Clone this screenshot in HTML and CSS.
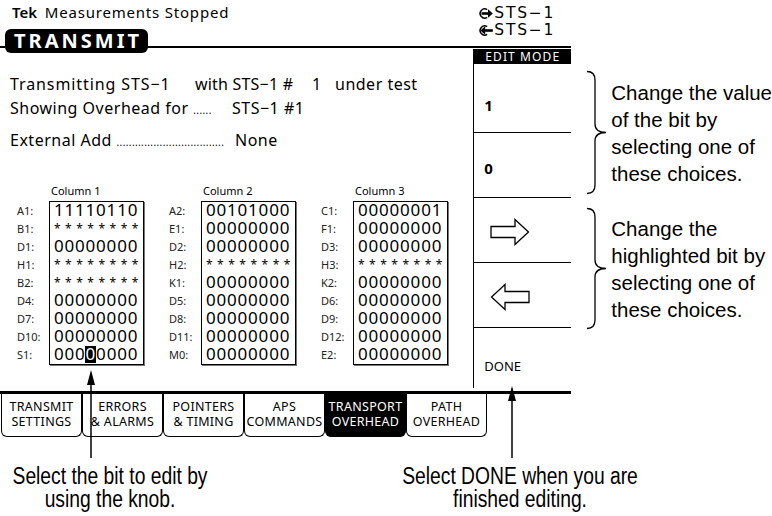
FILE: index.html
```html
<!DOCTYPE html>
<html>
  <head>
    <title>Transmit - Transport Overhead Edit</title>
    <link rel="stylesheet" href="styles.css">
  </head>
  <body>
    <div class="page">
      <div class="upper">
        <div class="screen">
          <div class="screen-head">
            <div class="status"><span class="tek">Tek</span> Measurements Stopped</div>
            <div class="sts">
              <div class="sts-line">
                <svg class="sts-icon" width="14" height="13" viewBox="0 0 14 13">
                  <path d="M8.2 2.6 A4.6 4.6 0 1 0 8.2 10.4" fill="none" stroke="#000" stroke-width="1.5"/>
                  <rect x="2.5" y="5.2" width="7" height="2.6" fill="#000"/>
                  <polygon points="9,2.2 13.8,6.5 9,10.8" fill="#000"/>
                </svg>
                <span>STS−1</span>
              </div>
              <div class="sts-line">
                <svg class="sts-icon" width="14" height="13" viewBox="0 0 14 13">
                  <path d="M8.2 2.6 A4.6 4.6 0 1 0 8.2 10.4" fill="none" stroke="#000" stroke-width="1.5"/>
                  <rect x="5" y="5.2" width="8.8" height="2.6" fill="#000"/>
                  <polygon points="6.2,2.2 1.4,6.5 6.2,10.8" fill="#000"/>
                </svg>
                <span>STS−1</span>
              </div>
            </div>
            <div class="title-row">
              <div class="stub"></div>
              <div class="title">TRANSMIT</div>
              <div class="rule"></div>
            </div>
          </div>

          <div class="screen-body">
            <div class="main">
              <div class="info-line">
                <span class="tx-a">Transmitting STS−1</span><span class="tx-b">with STS−1 #</span><span class="tx-c">1</span>under test
              </div>
              <div class="info-line info-pair">
                <span>Showing Overhead for <span class="dots">......</span></span>
                <span>STS−1 #1</span>
              </div>
              <div class="info-line info-pair info-last">
                <span>External Add <span class="dots">...................................</span></span>
                <span>None</span>
              </div>

              <div class="overhead">
                <div class="col">
                  <div class="col-head">Column 1</div>
                  <div class="labels">
                    <div>A1:</div><div>B1:</div><div>D1:</div><div>H1:</div><div>B2:</div>
                    <div>D4:</div><div>D7:</div><div>D10:</div><div>S1:</div>
                  </div>
                  <div class="box">
                    <div class="val">11110110</div>
                    <div class="val stars">********</div>
                    <div class="val">00000000</div>
                    <div class="val stars">********</div>
                    <div class="val stars">********</div>
                    <div class="val">00000000</div>
                    <div class="val">00000000</div>
                    <div class="val">00000000</div>
                    <div class="val">000<span class="hl">0</span>0000</div>
                  </div>
                </div>

                <div class="col">
                  <div class="col-head">Column 2</div>
                  <div class="labels">
                    <div>A2:</div><div>E1:</div><div>D2:</div><div>H2:</div><div>K1:</div>
                    <div>D5:</div><div>D8:</div><div>D11:</div><div>M0:</div>
                  </div>
                  <div class="box">
                    <div class="val">00101000</div>
                    <div class="val">00000000</div>
                    <div class="val">00000000</div>
                    <div class="val stars">********</div>
                    <div class="val">00000000</div>
                    <div class="val">00000000</div>
                    <div class="val">00000000</div>
                    <div class="val">00000000</div>
                    <div class="val">00000000</div>
                  </div>
                </div>

                <div class="col">
                  <div class="col-head">Column 3</div>
                  <div class="labels">
                    <div>C1:</div><div>F1:</div><div>D3:</div><div>H3:</div><div>K2:</div>
                    <div>D6:</div><div>D9:</div><div>D12:</div><div>E2:</div>
                  </div>
                  <div class="box">
                    <div class="val">00000001</div>
                    <div class="val">00000000</div>
                    <div class="val">00000000</div>
                    <div class="val stars">********</div>
                    <div class="val">00000000</div>
                    <div class="val">00000000</div>
                    <div class="val">00000000</div>
                    <div class="val">00000000</div>
                    <div class="val">00000000</div>
                  </div>
                </div>
              </div>
            </div>

            <div class="menu">
              <div class="mode">EDIT MODE</div>
              <div class="items">
                <div class="item item-first bit">1</div>
                <div class="item item-val bit">0</div>
                <div class="item item-arrow">
                  <svg width="40" height="28" viewBox="0 0 40 28">
                    <path d="M1 8.5 H25 V1.5 L38.5 14 L25 26.5 V19.5 H1 Z" fill="#fff" stroke="#000" stroke-width="1.3"/>
                  </svg>
                </div>
                <div class="item item-arrow">
                  <svg width="40" height="28" viewBox="0 0 40 28">
                    <path d="M39 8.5 H15 V1.5 L1.5 14 L15 26.5 V19.5 H39 Z" fill="#fff" stroke="#000" stroke-width="1.3"/>
                  </svg>
                </div>
                <div class="item item-done">DONE</div>
              </div>
            </div>
          </div>

          <div class="screen-foot">
            <div class="tab">TRANSMIT<br>SETTINGS</div>
            <div class="tab">ERRORS<br>&amp; ALARMS</div>
            <div class="tab">POINTERS<br>&amp; TIMING</div>
            <div class="tab">APS<br>COMMANDS</div>
            <div class="tab tab-active">TRANSPORT<br>OVERHEAD</div>
            <div class="tab">PATH<br>OVERHEAD</div>
          </div>
        </div>

        <div class="notes">
          <div class="note">
            <svg class="brace" width="24" height="125" viewBox="0 0 24 125">
              <path d="M2 1.5 Q10 1.5 10 10 V54 Q10 62.5 21 62.5 Q10 62.5 10 71 V115 Q10 123.5 2 123.5" fill="none" stroke="#000" stroke-width="1.3"/>
            </svg>
            <div class="note-text">Change the value<br>of the bit by<br>selecting one of<br>these choices.</div>
          </div>
          <div class="note note-second">
            <svg class="brace" width="24" height="123" viewBox="0 0 24 123">
              <path d="M2 1.5 Q10 1.5 10 10 V53 Q10 61.5 21 61.5 Q10 61.5 10 70 V113 Q10 121.5 2 121.5" fill="none" stroke="#000" stroke-width="1.3"/>
            </svg>
            <div class="note-text">Change the<br>highlighted bit by<br>selecting one of<br>these choices.</div>
          </div>
        </div>
      </div>

      <div class="captions">
        <div class="cap cap-left">
          <span>Select the bit to edit by</span>
          <span>using the knob.</span>
        </div>
        <div class="cap cap-right">
          <span>Select DONE when you are</span>
          <span>finished editing.</span>
        </div>
      </div>

      <!-- callout arrows drawn over the screen -->
      <svg class="callout callout-bit" width="10" height="88" viewBox="0 0 10 88">
        <line x1="5" y1="10" x2="5" y2="88" stroke="#000" stroke-width="1.5"/>
        <polygon points="5,0 1,15 9,15" fill="#000"/>
      </svg>
      <svg class="callout callout-done" width="10" height="72" viewBox="0 0 10 72">
        <line x1="5" y1="10" x2="5" y2="72" stroke="#000" stroke-width="1.5"/>
        <polygon points="5,0 1,15 9,15" fill="#000"/>
      </svg>
    </div>
  </body>
</html>
```

FILE: styles.css
```css
body {
  margin: 0;
  font-family: "Noto Sans", sans-serif;
  color: #000;
  background-color: #fff;
}

.page {
  position: relative;
  width: 772px;
  height: 516px;
  overflow: hidden;
}

.upper {
  display: flex;
}

.screen {
  width: 574px;
}

/* header: status, sts lines, TRANSMIT title */
.screen-head {
  display: grid;
  grid-template-columns: 1fr auto;
  grid-template-rows: 29px 19px;
}

.status {
  grid-row: 1;
  grid-column: 1;
  padding: 3px 0 0 12px;
  font-size: 15px;
  line-height: 18px;
  letter-spacing: 0.8px;
}

.tek {
  font-weight: 600;
  letter-spacing: 0;
  margin-right: 3px;
}

.sts {
  grid-row: 1 / 3;
  grid-column: 2;
  padding: 5px 16px 0 0;
  font-family: "DejaVu Sans", sans-serif;
  font-size: 15.5px;
  line-height: 17px;
  letter-spacing: 1.8px;
}

.sts-line {
  display: flex;
  align-items: center;
  gap: 1px;
}

.title-row {
  grid-row: 2;
  grid-column: 1 / 3;
  display: flex;
  align-items: flex-end;
}

.stub {
  width: 5px;
  border-bottom: 2px solid #000;
}

.rule {
  flex: 1;
  border-bottom: 2px solid #000;
}

.title {
  width: 143px;
  height: 24px;
  margin-bottom: -5px;
  background-color: #000;
  color: #fff;
  border-radius: 6px;
  font-size: 20px;
  font-weight: bold;
  line-height: 24px;
  letter-spacing: 3px;
  text-indent: 3px;
  text-align: center;
}

/* body */
.screen-body {
  display: flex;
  height: 343px;
}

.main {
  flex: 1;
  padding: 24px 0 0 10px;
}

.info-line {
  font-size: 16px;
  line-height: 24px;
  letter-spacing: 0.5px;
  white-space: nowrap;
}

.tx-a {
  display: inline-block;
  width: 185px;
  letter-spacing: 0.9px;
}

.tx-b {
  display: inline-block;
  width: 117px;
  letter-spacing: 0.2px;
}

.tx-c {
  display: inline-block;
  width: 23px;
}

.info-pair {
  display: grid;
  grid-template-columns: 222px auto;
}

.info-last {
  margin-top: 6px;
  grid-template-columns: 225px auto;
}

.dots {
  font-size: 10px;
  letter-spacing: 0.4px;
}

.overhead {
  display: flex;
  gap: 25px;
  margin-top: 30px;
  padding-left: 7px;
}

.col {
  display: grid;
  grid-template-columns: 32px 95px;
}

.col-head {
  grid-column: 2;
  height: 17px;
  padding-left: 2px;
  font-size: 11px;
  line-height: 14px;
}

.labels {
  padding-top: 1px;
  font-size: 11px;
  color: #222;
}

.labels div {
  height: 18px;
  line-height: 18px;
}

.box {
  border: 1px solid #000;
  box-shadow: 1px 1px 0 #777;
  padding-left: 4px;
}

.val {
  height: 18px;
  font-size: 17px;
  line-height: 15px;
  letter-spacing: 0.8px;
}

.stars {
  box-sizing: border-box;
  padding-top: 3px;
  font-size: 12px;
  line-height: 12px;
  letter-spacing: 4.5px;
}

.hl {
  display: inline-block;
  height: 17px;
  vertical-align: top;
  background-color: #000;
  color: #fff;
  margin-left: -1px;
  padding-left: 1px;
}

/* right side softkey menu */
.menu {
  width: 98px;
  display: flex;
  flex-direction: column;
  padding-top: 1px;
}

.mode {
  height: 15px;
  padding-left: 12px;
  background-color: #000;
  color: #fff;
  font-size: 12px;
  line-height: 15px;
  letter-spacing: 1.1px;
}

.items {
  flex: 1;
  display: flex;
  flex-direction: column;
  margin-bottom: 3px;
  border-left: 1px solid #000;
}

.item {
  box-sizing: border-box;
  height: 65px;
  padding-left: 10px;
  border-bottom: 1px solid #000;
}

.bit {
  font-size: 15px;
  font-weight: bold;
  line-height: 18px;
}

.item-first {
  height: 69px;
  padding-top: 32px;
}

.item-val {
  padding-top: 26px;
}

.item-arrow {
  padding: 20px 0 0 16px;
}

.item-done {
  flex: 1;
  border-bottom: none;
  padding-top: 30px;
  font-size: 13px;
  line-height: 16px;
}

/* bottom tabs */
.screen-foot {
  display: flex;
  height: 43px;
  padding-left: 1px;
  border-top: 3px solid #000;
}

.tab {
  box-sizing: border-box;
  width: 81px;
  padding-top: 5px;
  border: 1px solid #000;
  border-top: none;
  border-radius: 0 0 6px 6px;
  font-size: 12.5px;
  line-height: 15px;
  letter-spacing: 0.3px;
  text-align: center;
  white-space: nowrap;
}

.tab-active {
  background-color: #000;
  color: #fff;
}

/* annotations */
.notes {
  flex: 1;
  padding: 70px 0 0 14px;
}

.note {
  display: flex;
  align-items: center;
  gap: 2px;
  height: 125px;
}

.note-second {
  height: 123px;
  margin-top: 12px;
}

.note-text {
  font-family: "Liberation Sans", Arial, sans-serif;
  font-size: 20.5px;
  line-height: 27px;
  white-space: nowrap;
}

.captions {
  display: flex;
  padding-top: 28px;
  font-family: "Liberation Sans", Arial, sans-serif;
  font-size: 23.5px;
  line-height: 23px;
}

/* narrow face: Helvetica Narrow look */
.cap {
  display: flex;
  flex-direction: column;
  align-items: center;
  white-space: nowrap;
  transform: scaleX(0.82);
}

.cap-left {
  width: 220px;
}

.cap-right {
  width: 240px;
  margin-left: 180px;
}

.callout {
  position: absolute;
}

.callout-bit {
  left: 86px;
  top: 370px;
}

.callout-done {
  left: 507px;
  top: 386px;
}
```
